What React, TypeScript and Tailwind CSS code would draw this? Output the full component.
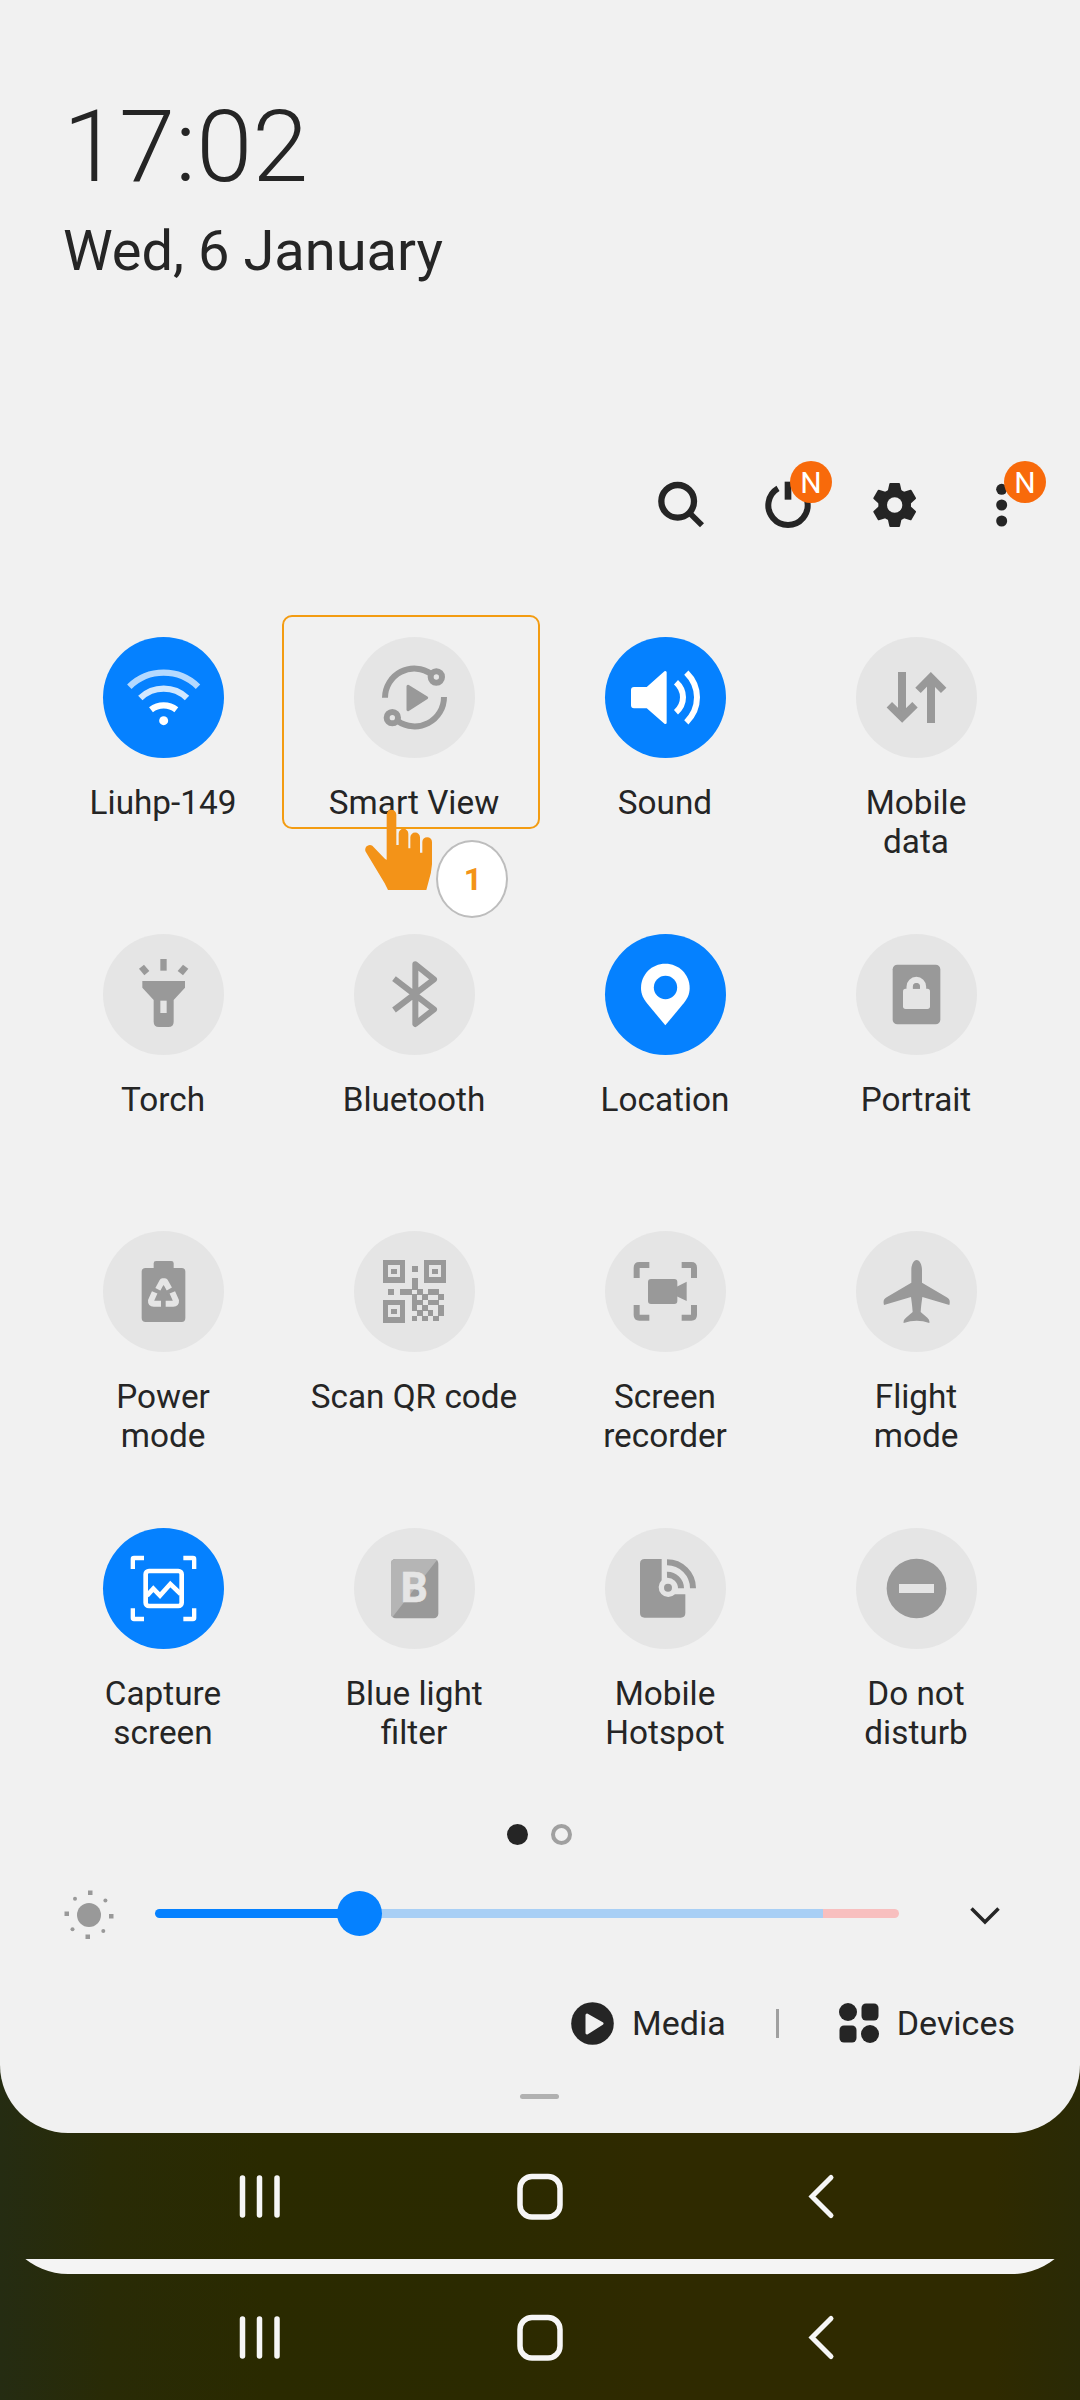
import type { ReactNode } from "react";

const GREY = "#999999";
const TILE = "#e5e5e5";
const BLUE = "#0581ff";
const INK = "#252525";

type Tile = { label: string; active?: boolean; viewBox: string; icon: ReactNode };

const qrRows = ["010110", "101001", "110110", "101001", "010101", "101010"];

const Finder = ({ x, y }: { x: number; y: number }) => (
  <g>
    <rect x={x + 8} y={y + 8} width="52" height="52" fill="none" stroke={GREY} strokeWidth="16" />
    <rect x={x + 25} y={y + 26} width="18" height="17" fill={GREY} />
  </g>
);

const tiles: Tile[] = [
  {
    label: "Liuhp-149",
    active: true,
    viewBox: "69 111 363 363",
    icon: (
      <g fill="none" stroke="#fff" strokeWidth="19">
        <path d="M148 260A147 147 0 0 1 354 260" opacity=".7" />
        <path d="M181 294A101.500 101.500 0 0 1 321 294" opacity=".82" />
        <path d="M213 329A62 62 0 0 1 289 329" />
        <circle cx="251" cy="362" r="13.500" fill="#fff" stroke="none" />
      </g>
    ),
  },
  {
    label: "Smart View",
    viewBox: "822 111 363 363",
    icon: (
      <g fill="none" stroke={GREY} strokeWidth="18">
        <path d="M915 293A88 88 0 0 1 1054 222" />
        <circle cx="1069" cy="231" r="17" />
        <path d="M1092 291A88 88 0 0 1 953 363" />
        <circle cx="937" cy="353" r="17" />
        <path d="M984 259L1040 293L984 329Z" fill={GREY} strokeWidth="9" strokeLinejoin="round" />
      </g>
    ),
  },
  {
    label: "Sound",
    active: true,
    viewBox: "75 81 363 363",
    icon: (
      <g fill="none" stroke="#fff" strokeWidth="18">
        <path
          d="M157 240Q157 235 162 235H202L256 187V338L202 291H162Q157 291 157 286Z"
          fill="#fff"
          strokeWidth="8"
          strokeLinejoin="round"
        />
        <path d="M288 217Q309 236 309 262Q309 288 288 307" />
        <path d="M319 188Q351 220 351 262Q351 305 319 337" />
      </g>
    ),
  },
  {
    label: "Mobile\ndata",
    viewBox: "828 81 363 363",
    icon: (
      <g fill="none" stroke={GREY} strokeWidth="24">
        <path d="M966 186V322" />
        <path d="M928 284L966.500 322L1005 284" strokeWidth="23" />
        <path d="M1053 339V204" />
        <path d="M1014 241L1052.500 202L1091 241" strokeWidth="23" />
      </g>
    ),
  },
  {
    label: "Torch",
    viewBox: "69 72 363 363",
    icon: (
      <g fill={GREY}>
        <path d="M187 213H315V233L281 270V335Q281 351 265 351H237Q221 351 221 335V270L187 233Z" />
        <rect x="241" y="272" width="19" height="37" fill={TILE} />
        <rect x="241" y="147" width="19" height="35" />
        <path d="M177 176L192 164L208 183L193 196Z" />
        <path d="M325 176L309 164L293 183L309 196Z" />
      </g>
    ),
  },
  {
    label: "Bluetooth",
    viewBox: "822 72 363 363",
    icon: (
      <path
        d="M942 206L1062 298L1006 342V163L1062 208L942 300"
        fill="none"
        stroke={GREY}
        strokeWidth="18"
        strokeLinejoin="round"
      />
    ),
  },
  {
    label: "Location",
    active: true,
    viewBox: "75 72 363 363",
    icon: (
      <g>
        <path
          d="M256 161C215 161 183 193 183 234C183 252 190 266 201 280L256 346L311 280C322 266 329 252 329 234C329 193 297 161 256 161Z"
          fill="#fff"
        />
        <circle cx="256.500" cy="232.500" r="35" fill={BLUE} />
      </g>
    ),
  },
  {
    label: "Portrait",
    viewBox: "828 72 363 363",
    icon: (
      <g>
        <rect x="938" y="164" width="143" height="179" rx="14" fill={GREY} />
        <rect x="969" y="236" width="81" height="61" rx="8" fill={TILE} />
        <path d="M989 240V230A20 20 0 0 1 1029 230V240" fill="none" stroke={TILE} strokeWidth="19" />
        <path d="M999 236V231A10.500 12 0 0 1 1020 231V236Z" fill={GREY} />
      </g>
    ),
  },
  {
    label: "Power\nmode",
    viewBox: "69 63 363 363",
    icon: (
      <g>
        <path
          d="M221 160Q221 153 228 153H274Q281 153 281 160V174H305Q316 174 316 185V324Q316 336 305 336H197Q185 336 185 324V185Q185 174 197 174H221Z"
          fill={GREY}
        />
        <g fill="none" stroke={TILE} strokeWidth="18" strokeLinejoin="round">
          <path d="M234 238L247 214H255L268 237" />
          <path d="M224 247L213 272Q212 281 221 281H243" />
          <path d="M277 247L288 272Q289 281 280 281H257" />
        </g>
        <path d="M250 226L263 250H258L275 270H226L243 250H237Z" fill={GREY} />
      </g>
    ),
  },
  {
    label: "Scan QR code",
    viewBox: "822 63 363 363",
    icon: (
      <g fill={GREY} shapeRendering="crispEdges">
        <Finder x={908} y={150} />
        <Finder x={1031} y={150} />
        <Finder x={908} y={270} />
        <rect x="995" y="167" width="18" height="18" />
        <rect x="924" y="237" width="18" height="18" />
        <rect x="961" y="237" width="36" height="18" />
        <rect x="995" y="204" width="18" height="36" />
        {qrRows.map((row, r) =>
          row.split("").map((cell, c) =>
            cell === "1" ? (
              <rect key={`${r}-${c}`} x={995 + c * 16} y={237 + r * 16} width="16.500" height="16.500" />
            ) : null,
          ),
        )}
      </g>
    ),
  },
  {
    label: "Screen\nrecorder",
    viewBox: "75 63 363 363",
    icon: (
      <g>
        <g fill="none" stroke={GREY} strokeWidth="18">
          <path d="M170 204V173Q170 165 178 165H208" />
          <path d="M305 165H334Q342 165 342 173V204" />
          <path d="M342 285V315Q342 323 334 323H305" />
          <path d="M208 323H178Q170 323 170 315V285" />
        </g>
        <rect x="204" y="207" width="88" height="75" rx="9" fill={GREY} />
        <path d="M290 230L320 215V273L290 259Z" fill={GREY} />
      </g>
    ),
  },
  {
    label: "Flight\nmode",
    viewBox: "828 63 363 363",
    icon: (
      <path
        d="M1010 150C1019 150 1026 164 1026 180V218L1100 262C1109 267 1111 273 1108 285L1027 261C1025 276 1023 290 1022 306L1042 323Q1050 330 1048 339Q1029 332 1010 332Q991 332 971 339Q969 330 978 323L998 306C997 290 995 276 993 261L912 285C909 273 911 267 920 262L994 218V180C994 164 1001 150 1010 150Z"
        fill={GREY}
      />
    ),
  },
  {
    label: "Capture\nscreen",
    active: true,
    viewBox: "69 54 363 363",
    icon: (
      <g fill="none" stroke="#fff" strokeWidth="13">
        <path d="M158.500 177V147Q158.500 144 162 144H192" />
        <path d="M310 144H339Q342.500 144 342.500 147V177" />
        <path d="M342.500 295V324Q342.500 327 339 327H310" />
        <path d="M192 327H162Q158.500 327 158.500 324V295" />
        <rect x="197" y="183" width="108" height="105" rx="10" strokeWidth="14" />
        <path d="M201 257L220 236L240 257L271 222L302 252" strokeWidth="14" />
      </g>
    ),
  },
  {
    label: "Blue light\nfilter",
    viewBox: "822 54 363 363",
    icon: (
      <g>
        <rect x="933" y="147" width="142" height="178" rx="14" fill={GREY} />
        <path d="M1071 150Q1067 147 1061 147H947Q933 147 933 161V311Q933 318 937 322Z" fill="#b5b5b5" />
        <text
          x="962"
          y="276"
          fontFamily="Roboto, sans-serif"
          fontWeight="700"
          fontSize="127"
          fill={TILE}
          stroke={TILE}
          strokeWidth="2"
        >
          B
        </text>
      </g>
    ),
  },
  {
    label: "Mobile\nHotspot",
    viewBox: "75 54 363 363",
    icon: (
      <g>
        <path
          d="M194 147H245V211A29 29 0 1 0 285 253H316V309Q316 323 302 323H194Q180 323 180 309V161Q180 147 194 147Z"
          fill={GREY}
        />
        <circle cx="264" cy="233.500" r="12" fill={GREY} />
        <g fill="none" stroke={GREY} strokeWidth="18">
          <path d="M261 157A78 78 0 0 1 339 235" />
          <path d="M261 194A41 41 0 0 1 303 235" />
        </g>
      </g>
    ),
  },
  {
    label: "Do not\ndisturb",
    viewBox: "828 54 363 363",
    icon: (
      <g>
        <circle cx="1009.500" cy="235.500" r="89.500" fill={GREY} />
        <rect x="957" y="222" width="105" height="27" fill={TILE} />
      </g>
    ),
  },
];

const NewBadge = () => (
  <span className="absolute top-[-14px] left-[56px] flex size-[42px] items-center justify-center rounded-full bg-[#f86a0b] pt-[2px] text-[30px] leading-none text-white">
    N
  </span>
);

const ToolIcon = ({ viewBox, children, badge }: { viewBox: string; children: ReactNode; badge?: boolean }) => (
  <button className="relative flex h-[60px] w-[107px] items-center justify-center">
    <svg className="size-[60px]" viewBox={viewBox}>
      {children}
    </svg>
    {badge && <NewBadge />}
  </button>
);

const NavBar = () => (
  <div className="flex h-[126px] items-center px-[130px] pt-[2px] [&>div]:flex [&>div]:flex-1 [&>div]:justify-center">
    <div>
      <svg className="mr-[16px] h-[48px] w-[48px]" viewBox="0 0 48 48">
        <path d="M7.500 5V42M24.500 5V42M42 5V42" stroke="#f6f6f6" strokeWidth="5.500" strokeLinecap="round" />
      </svg>
    </div>
    <div>
      <svg className="ml-[1px] h-[48px] w-[48px]" viewBox="0 0 48 48">
        <rect x="4" y="3.500" width="40" height="40.500" rx="12" fill="none" stroke="#f6f6f6" strokeWidth="5.500" />
      </svg>
    </div>
    <div>
      <svg className="ml-[18px] h-[48px] w-[48px]" viewBox="0 0 48 48">
        <path d="M33 4.500L14 23.500L33 42.500" fill="none" stroke="#f6f6f6" strokeWidth="5" strokeLinecap="round" />
      </svg>
    </div>
  </div>
);

const wallpaper =
  "bg-[linear-gradient(90deg,#252c12_0%,#292b06_10%,#2a2a00_25%,#2b2a00_45%,#2f2a00_60%,#2f2a00_92%,#2a2a06_100%)]";

export default function App() {
  return (
    <div className={`relative h-[2400px] w-[1080px] overflow-hidden font-[Roboto,sans-serif] text-[#252525] ${wallpaper}`}>
      <main className="flex h-[2133px] flex-col rounded-b-[68px] bg-[#f1f1f1] pt-[88px]">
        <header className="h-[196px] pl-[63px]">
          <div className="h-[118px] text-[101px] leading-[118px] font-light">17:02</div>
          <div className="mt-[12px] text-[56px] leading-[66px]">Wed, 6 January</div>
        </header>

        <div className="mt-[191px] flex justify-end pr-[25px]">
          <ToolIcon viewBox="90 106 180 180">
            <circle cx="170" cy="185" r="49" fill="none" stroke={INK} strokeWidth="19" />
            <path d="M205 219L243 257" stroke={INK} strokeWidth="17" />
          </ToolIcon>
          <ToolIcon viewBox="413 106 180 180" badge>
            <path d="M473 146A59 59 0 1 0 533 146" fill="none" stroke={INK} strokeWidth="18" />
            <rect x="493" y="126" width="20" height="54" fill={INK} />
          </ToolIcon>
          <ToolIcon viewBox="735 106 180 180">
            <g fill={INK} stroke={INK} strokeWidth="6" strokeLinejoin="round">
              <circle cx="824" cy="196" r="46" />
              {[0, 60, 120, 180, 240, 300].map((a) => (
                <path key={a} transform={`rotate(${a} 824 196)`} d="M811 133H837L843 160H805Z" />
              ))}
            </g>
            <circle cx="824" cy="196" r="23" fill="#f1f1f1" />
          </ToolIcon>
          <ToolIcon viewBox="1055 106 180 180" badge>
            <g fill={INK}>
              <circle cx="1144" cy="149" r="16.500" />
              <circle cx="1144" cy="196" r="16.500" />
              <circle cx="1144" cy="244" r="16.500" />
            </g>
          </ToolIcon>
        </div>

        <div className="mt-[101.500px] grid grid-cols-4 auto-rows-[297px] px-[38px]">
          {tiles.map((t) => (
            <div key={t.label} className="flex flex-col items-center">
              <div className={`size-[121px] shrink-0 rounded-full ${t.active ? "bg-[#0581ff]" : "bg-[#e5e5e5]"}`}>
                <svg className="size-full" viewBox={t.viewBox}>
                  {t.icon}
                </svg>
              </div>
              <div className="mt-[25px] mr-px text-center text-[33.3px] leading-[39px] whitespace-pre-line">{t.label}</div>
            </div>
          ))}
        </div>

        <div className="mt-[-0.500px] flex h-[21px] justify-center gap-[23px] pr-[1px]">
          <span className="size-[21px] rounded-full bg-[#252525]" />
          <span className="size-[21px] rounded-full border-4 border-[#a0a0a0]" />
        </div>

        <div className="mt-[43px] flex h-[50px] items-center pl-[63px]">
          <svg className="size-[52px]" viewBox="63 1887 52 52" fill="#999999">
            <circle cx="89" cy="1915" r="12" />
            <rect x="88" y="1890.500" width="4.500" height="4.500" />
            <rect x="64.500" y="1911.500" width="4.500" height="4.500" />
            <rect x="109" y="1914" width="4.500" height="4.500" />
            <rect x="85.500" y="1934.500" width="4.500" height="4.500" />
            <circle cx="75" cy="1898.700" r="2" />
            <circle cx="105.400" cy="1900.500" r="2" />
            <circle cx="72.500" cy="1929.300" r="2" />
            <circle cx="103.300" cy="1931" r="2" />
          </svg>
          <div className="relative ml-[40px] flex h-[9px] w-[744px]">
            <span className="w-[205px] rounded-l-full bg-[#0581ff]" />
            <span className="w-[463px] bg-[#a8cff5]" />
            <span className="w-[76px] rounded-r-full bg-[#f8bfbf]" />
            <span className="absolute top-[-18px] left-[182px] size-[45px] rounded-full bg-[#0581ff]" />
          </div>
          <svg className="ml-[66px] h-[40px] w-[40px]" viewBox="0 0 40 40">
            <path d="M6.500 15.500L20 29L33.500 15.500" fill="none" stroke={INK} strokeWidth="3.500" />
          </svg>
        </div>

        <div className="mt-[63px] flex h-[44px] items-center justify-end pr-[65px] text-[34px]">
          <svg className="size-[43px]" viewBox="0 0 43 43">
            <circle cx="21.500" cy="21.500" r="21.300" fill={INK} />
            <path d="M16 13L31 21.500L16 31Z" fill="#f1f1f1" stroke="#f1f1f1" strokeWidth="3" strokeLinejoin="round" />
          </svg>
          <span className="ml-[18px]">Media</span>
          <span className="ml-[50px] h-[29px] w-[3px] bg-[#a0a0a0]" />
          <svg className="ml-[60px] size-[40px]" viewBox="0 0 40 40" fill={INK}>
            <circle cx="9" cy="9" r="9" />
            <rect x="22.500" y="0.500" width="17" height="17" rx="4.500" />
            <rect x="0.500" y="22.500" width="17" height="17" rx="4.500" />
            <circle cx="31" cy="31" r="9" />
          </svg>
          <span className="ml-[18px]">Devices</span>
        </div>

        <div className="mt-[49px] mr-px h-[5px] w-[39px] self-center rounded-full bg-[#b1b1b1]" />
      </main>

      <NavBar />
      <div className={`h-[141px] ${wallpaper}`}>
        <div className="flex h-[15px] flex-col justify-end overflow-hidden">
          <div className="h-[140px] shrink-0 rounded-b-[68px] bg-[#f4f4f4]" />
        </div>
        <NavBar />
      </div>

      <div className="absolute top-[615px] left-[282px] h-[214px] w-[258px] rounded-[10px] border-2 border-[#f39c12]" />
      <svg className="absolute top-[800px] left-[360px] h-[100px] w-[80px]" viewBox="840 600 240 300">
        <path
          d="M920 644A14.500 14.500 0 0 1 949 644V735H956V701A14.500 14.500 0 0 1 985 701V745H991V712A14.500 14.500 0 0 1 1020 712V758H1027V726A14.500 14.500 0 0 1 1056 726V793Q1054 820 1047 840L1039 870H924L914 850L858 757C850 744 864 730 877 737L913 775Q918 780 920 779Z"
          fill="#f39318"
        />
      </svg>
      <div className="absolute top-[840px] left-[436px] flex h-[78px] w-[72px] items-center justify-center rounded-[50%] border-2 border-[#bdbdbd] bg-white pl-[2px] text-[32px] leading-none font-bold text-[#f39318]">
        1
      </div>
    </div>
  );
}
